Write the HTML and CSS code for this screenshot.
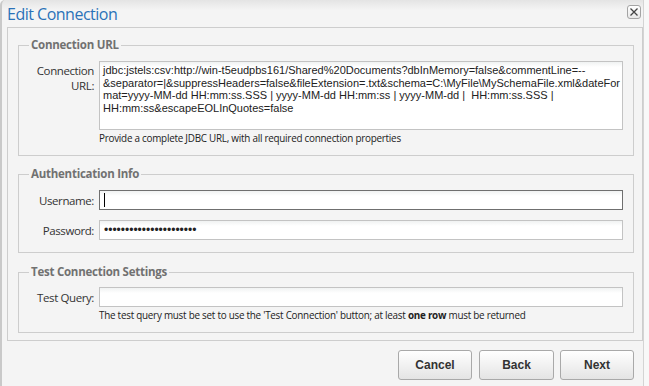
FILE: index.html
```html
<!DOCTYPE html>
<html>
<head>
<meta charset="utf-8">
<link rel="stylesheet" href="styles.css">
</head>
<body>
<div class="dialog">
  <div class="titlebar">
    <span class="title">Edit Connection</span>
    <span class="close"><svg width="10" height="10" viewBox="0 0 10 10"><path d="M1.5 1.5 L8.5 8.5 M8.5 1.5 L1.5 8.5" stroke="#444" stroke-width="1.3" fill="none"/></svg></span>
  </div>
  <div class="panel">
    <fieldset class="group g1">
      <legend>Connection URL</legend>
      <div class="grid">
        <label class="lbl lbl-top">Connection URL:</label>
        <textarea class="area">jdbc:jstels:csv:http://win-t5eudpbs161/Shared%20Documents?dbInMemory=false&amp;commentLine=--&amp;separator=|&amp;suppressHeaders=false&amp;fileExtension=.txt&amp;schema=C:\MyFile\MySchemaFile.xml&amp;dateFormat=yyyy-MM-dd HH:mm:ss.SSS | yyyy-MM-dd HH:mm:ss | yyyy-MM-dd |  HH:mm:ss.SSS | HH:mm:ss&amp;escapeEOLInQuotes=false</textarea>
        <span></span>
        <div class="hint">Provide a complete JDBC URL, with all required connection properties</div>
      </div>
    </fieldset>
    <fieldset class="group g2">
      <legend>Authentication Info</legend>
      <div class="grid">
        <label class="lbl">Username:</label>
        <div class="field-wrap"><input class="field focused" type="text" value=""><span class="caret"></span></div>
        <label class="lbl">Password:</label>
        <input class="field pass" type="password" value="passwordpassword123456">
      </div>
    </fieldset>
    <fieldset class="group g3">
      <legend>Test Connection Settings</legend>
      <div class="grid">
        <label class="lbl">Test Query:</label>
        <input class="field" type="text" value="">
        <span></span>
        <div class="hint">The test query must be set to use the 'Test Connection' button; at least <b>one row</b> must be returned</div>
      </div>
    </fieldset>
  </div>
  <div class="buttons">
    <button class="btn btn-cancel">Cancel</button>
    <button class="btn btn-mid">Back</button>
    <button class="btn">Next</button>
  </div>
</div>
</body>
</html>
```
FILE: styles.css
```css
html, body {
  margin: 0;
  padding: 0;
  background: #f8f8f8;
}
.dialog {
  width: 644px;
  height: 386px;
  box-sizing: border-box;
  border-left: 2px solid #c9c9c9;
  border-right: 1px solid #d4d4d4;
  border-top-left-radius: 5px;
  background: linear-gradient(#e4e4e4 0px, #f4f4f4 10px, #f4f4f4 100%);
  display: flex;
  flex-direction: column;
}
.titlebar {
  height: 27px;
  display: flex;
  align-items: flex-start;
  justify-content: space-between;
  padding: 0 2px 0 5px;
  box-sizing: border-box;
}
.title {
  font-family: "Open Sans", "Noto Sans", sans-serif;
  font-size: 16px;
  color: #2b72b8;
  line-height: 20px;
  margin-top: 4px;
  letter-spacing: -0.5px;
}
.close {
  width: 14px;
  height: 14px;
  margin-top: 5px;
  border: 1px solid #a4a4a4;
  border-radius: 3px;
  background: linear-gradient(#ffffff, #e8e8e8);
  display: flex;
  align-items: center;
  justify-content: center;
  box-sizing: border-box;
}
.close svg { display: block; }
.panel {
  margin: 0 0 0 5px;
  width: 636px;
  height: 314px;
  box-sizing: border-box;
  border: 1px solid #cdcdcd;
  padding: 9px 8px 0 10px;
  display: flex;
  flex-direction: column;
}
.group {
  margin: 0;
  border: 1px solid #cdcdcd;
  padding: 0 9px 0 10px;
  min-width: 0;
}
.group legend {
  font-family: "Open Sans", "Noto Sans", sans-serif;
  font-weight: bold;
  font-size: 11.5px;
  line-height: 16px;
  color: #717171;
  padding: 0 2px;
  letter-spacing: -0.25px;
}
.g1 { height: 119px; box-sizing: border-box; padding-top: 8px; }
.g2 { margin-top: 10px; height: 87px; box-sizing: border-box; padding-top: 8px; }
.g3 { margin-top: 11px; height: 69px; box-sizing: border-box; padding-top: 7px; }
.grid {
  display: grid;
  grid-template-columns: 65px 1fr;
  column-gap: 5px;
  row-gap: 10px;
}
.g1 .grid, .g3 .grid { row-gap: 0; }
.lbl {
  font-family: "Open Sans", "Noto Sans", sans-serif;
  font-size: 11.5px;
  color: #333;
  text-align: right;
  line-height: 15px;
  align-self: center;
  letter-spacing: -0.4px;
}
.lbl-top {
  align-self: start;
  margin-top: 2px;
  word-spacing: 30px;
}
.area {
  box-sizing: border-box;
  width: 524px;
  height: 69px;
  border: 1px solid #c3c3c3;
  background: linear-gradient(#f0f2f2, #ffffff 5px);
  font-family: "Liberation Sans", Arial, sans-serif;
  font-size: 11px;
  line-height: 12.5px;
  color: #222;
  padding: 2px 0 2px 3px;
  resize: none;
  margin: 0;
  overflow: hidden;
}
.hint {
  font-family: "Open Sans", "Noto Sans", sans-serif;
  font-size: 9.9px;
  color: #222;
  line-height: 14px;
  padding-top: 1px;
  letter-spacing: -0.25px;
}
.hint b { font-weight: bold; }
.field-wrap { position: relative; }
.field {
  box-sizing: border-box;
  width: 524px;
  height: 20px;
  border: 1px solid #c3c3c3;
  background: linear-gradient(#f0f2f2, #ffffff 5px);
  margin: 0;
  padding: 0 4px;
  font-family: "Liberation Sans", Arial, sans-serif;
  font-size: 11px;
  color: #222;
  display: block;
  outline: none;
}
.field.pass { font-size: 12px; }
.field.focused { border-color: #6f6f6f; }
.caret {
  position: absolute;
  left: 5px;
  top: 3px;
  width: 1px;
  height: 14px;
  background: #000;
}
.buttons {
  display: flex;
  justify-content: flex-end;
  gap: 6px;
  padding: 9px 9px 0 0;
}
.btn {
  width: 74px;
  height: 30px;
  box-sizing: border-box;
  border: 1px solid #a9a9a9;
  border-radius: 3px;
  background: linear-gradient(#ffffff, #e4e4e4);
  font-family: "Liberation Sans", Arial, sans-serif;
  font-weight: bold;
  font-size: 12px;
  color: #333;
  padding: 0;
}
.btn-cancel { margin-right: 1px; }
.btn-mid { width: 75px; }
```
